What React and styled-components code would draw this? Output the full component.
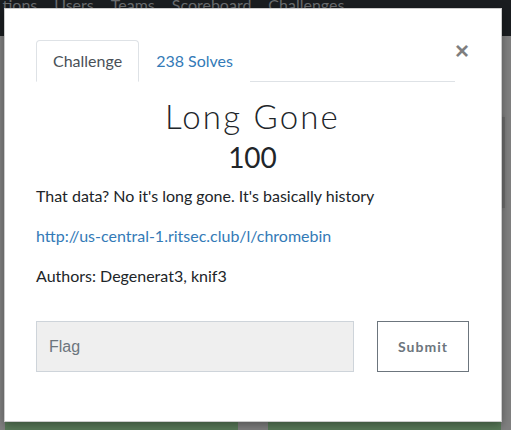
import React from 'react';
import styled, { createGlobalStyle } from 'styled-components';

const GlobalStyle = createGlobalStyle`
  html, body {
    margin: 0;
    padding: 0;
    background: #808080;
    font-family: 'Lato', 'Noto Sans', sans-serif;
    overflow: hidden;
  }
`;

const Page = styled.div`
  position: relative;
  width: 511px;
  height: 430px;
  overflow: hidden;
  background: #808080;
`;

const Navbar = styled.nav`
  height: 36px;
  background: #1a1d20;
  display: flex;
  align-items: flex-start;
  margin-left: -6px;
`;

const NavLink = styled.span`
  font-size: 16px;
  line-height: 1;
  color: #6b6d70;
  padding: 0 8.5px;
  margin-top: -3px;
`;

const SideShadow = styled.div`
  margin: 81px 6px 0 auto;
  width: 60px;
  height: 91px;
  background: #6c6c6c;
  box-shadow: -2px 0 4px rgba(0, 0, 0, 0.2);
`;

const ChallengeGrid = styled.div`
  display: grid;
  grid-template-columns: 233px 233px;
  column-gap: 30px;
  padding-left: 5px;
  margin-top: 214px;
`;

const ChallengeButton = styled.div`
  height: 40px;
  background: #597a59;
`;

const Modal = styled.div`
  position: absolute;
  top: 8px;
  left: 4px;
  width: 498px;
  height: 414px;
  box-sizing: border-box;
  background: #fff;
  border: 1px solid rgba(0, 0, 0, 0.2);
  box-shadow: 0 3px 9px rgba(0, 0, 0, 0.35);
  padding: 31px 32px 0 31px;
`;

const Header = styled.div`
  display: flex;
  align-items: flex-start;
`;

const Tabs = styled.ul`
  flex: 1;
  display: flex;
  list-style: none;
  margin: 0;
  padding: 0;
  border-bottom: 1px solid #dee2e6;
`;

const Tab = styled.li`
  margin-bottom: -1px;
  padding: 8px 16px;
  font-size: 16px;
  line-height: 24px;
  border: 1px solid ${p => (p.$active ? '#dee2e6' : 'transparent')};
  border-bottom-color: ${p => (p.$active ? '#fff' : 'transparent')};
  border-radius: 4px 4px 0 0;
  color: ${p => (p.$active ? '#495057' : '#337ab7')};
  background: #fff;
`;

const Close = styled.span`
  font-family: 'Liberation Sans', 'DejaVu Sans', sans-serif;
  font-size: 24px;
  font-weight: 700;
  line-height: 1;
  color: #000;
  opacity: 0.5;
  margin-top: -1px;
`;

const Body = styled.div`
  text-align: center;
  padding-top: 14px;
`;

const Title = styled.h3`
  margin: 0;
  font-family: 'Lato', sans-serif;
  font-weight: 300;
  font-size: 33px;
  letter-spacing: 2.2px;
  line-height: 40px;
  color: #212529;
`;

const Points = styled.h4`
  margin: 4px 0 0;
  font-weight: 400;
  font-size: 28px;
  line-height: 34px;
  color: #212529;
`;

const Description = styled.div`
  text-align: left;
  margin-top: 10px;
  font-size: 16px;
  line-height: 24px;
  color: #212529;
`;

const Para = styled.p`
  margin: 0 0 16px;
`;

const Link = styled.a`
  color: #337ab7;
  text-decoration: none;
`;

const FlagRow = styled.div`
  display: flex;
  justify-content: space-between;
  margin-top: 33px;
`;

const FlagInput = styled.input`
  width: 318px;
  height: 51px;
  box-sizing: border-box;
  background: #efefef;
  border: 1px solid #ced4da;
  padding: 0 12px;
  font-family: 'Liberation Sans', 'Noto Sans', sans-serif;
  font-size: 16px;
  color: #495057;
  outline: none;

  &::placeholder {
    color: #6c757d;
  }
`;

const SubmitButton = styled.button`
  width: 92px;
  height: 51px;
  box-sizing: border-box;
  background: #fff;
  border: 1px solid #6c757d;
  font-family: 'Lato', sans-serif;
  font-weight: 700;
  font-size: 14px;
  letter-spacing: 1px;
  color: #6c757d;
`;

export default function App() {
  return (
    <Page>
      <GlobalStyle />
      <Navbar>
        {['Notifications', 'Users', 'Teams', 'Scoreboard', 'Challenges'].map(l => (
          <NavLink key={l}>{l === 'Notifications' ? 'tions' : l}</NavLink>
        ))}
      </Navbar>
      <SideShadow />
      <ChallengeGrid>
        <ChallengeButton />
        <ChallengeButton />
      </ChallengeGrid>

      <Modal>
        <Header>
          <Tabs>
            <Tab $active>Challenge</Tab>
            <Tab>238 Solves</Tab>
          </Tabs>
          <Close>×</Close>
        </Header>
        <Body>
          <Title>Long Gone</Title>
          <Points>100</Points>
          <Description>
            <Para>That data? No it's long gone. It's basically history</Para>
            <Para>
              <Link href="#">http://us-central-1.ritsec.club/l/chromebin</Link>
            </Para>
            <Para>Authors: Degenerat3, knif3</Para>
          </Description>
          <FlagRow>
            <FlagInput placeholder="Flag" />
            <SubmitButton>Submit</SubmitButton>
          </FlagRow>
        </Body>
      </Modal>
    </Page>
  );
}
